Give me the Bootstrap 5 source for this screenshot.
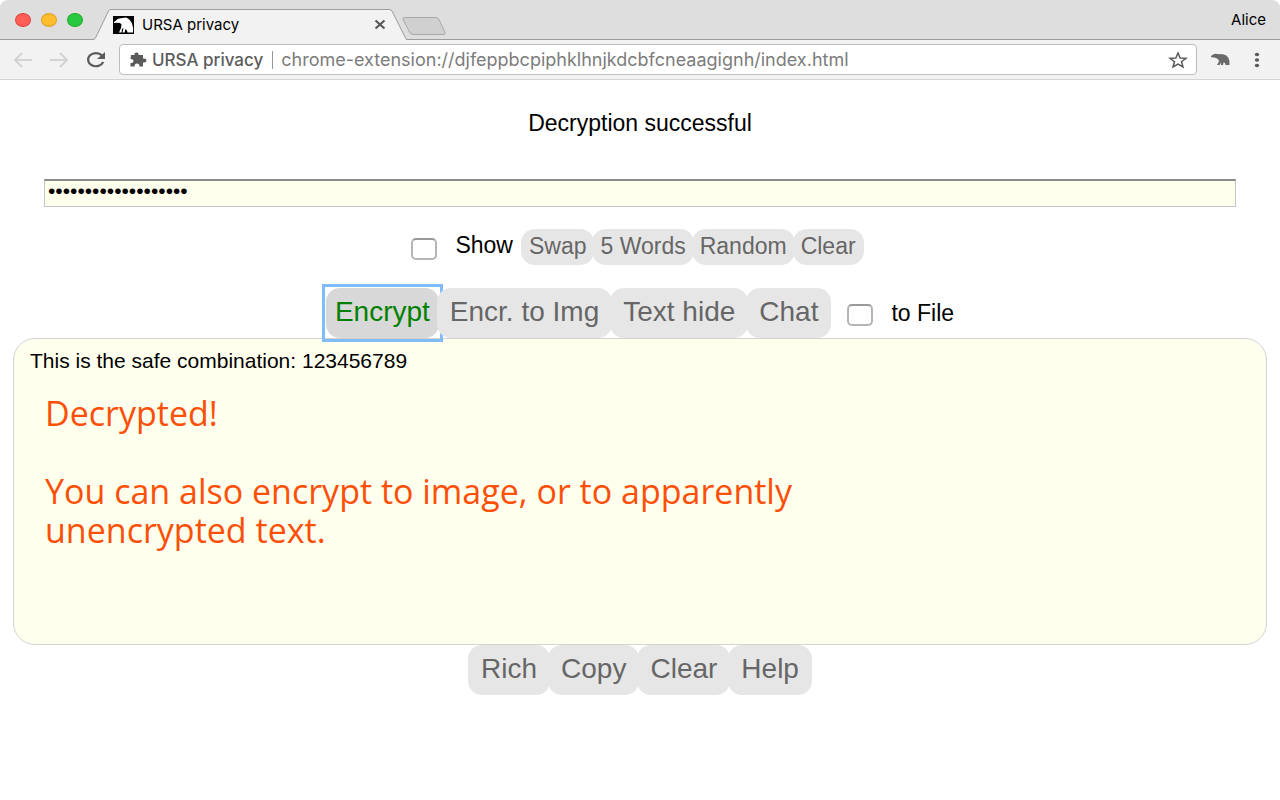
<!DOCTYPE html>
<html lang="en">
<head>
<meta charset="utf-8">
<meta name="viewport" content="width=device-width, initial-scale=1">
<title>URSA privacy</title>
<link href="https://cdn.jsdelivr.net/npm/bootstrap@5.3.0/dist/css/bootstrap.min.css" rel="stylesheet">
<style>
body { font-family: "Liberation Sans", Arial, sans-serif; font-size: 23px; line-height: 28px; color: #000; background: #fff; }
.chrome-ui { font-family: Inter, sans-serif; font-size: 15px; line-height: 20px; }
.tab-strip { height: 40px; background: #dedede; border-radius: 8px 8px 0 0; box-shadow: inset 0 -1px #9c9c9c; padding-right: 14px; }
.lights { gap: 10px; padding: 0 10px 0 15px; }
.light { width: 16px; height: 14px; border-radius: 50%; border: 1px solid; }
.tab-item { width: 314px; height: 40px; padding: 9px 21px 0 20px; }
.tab-shape { left: 0; top: 0; z-index: 0; }
.tab-item > :not(.tab-shape) { position: relative; }
.bar { height: 40px; background: #f2f2f2; border-bottom: 1px solid #d4d4d4; padding: 0 20px 0 13px; }
.icon-btn { background: none; border: 0; padding: 0; line-height: 0; display: block; }
.address { height: 31px; border: 1px solid #bdbdbd; border-radius: 4px; margin: 0 14px 0 12px; padding: 0 8px 0 9px; font-size: 17px; color: #7c7c7c; }
.address strong { font-weight: 500; color: #5c5c5c; }
.address input { border: 0; outline: 0; padding: 0; color: inherit; background: none; min-width: 0; font-size: 18px; }
.divider { width: 1px; height: 18px; background: #999; margin: 0 8px 0 9px; }
.status { margin: 29px 0 42px; }
.key-wrap { display: grid; }
.key-field { height: 28px; margin: 0 44px 22px; border: 1px solid #c4c4c4; border-top: 2px solid #8a8a8a; background: #ffffee; padding: 0 3px 5px; font-size: 21px; outline: 0; }
.pill { border: 0; background: #e6e6e6; color: #666; border-radius: 14px; height: 36px; padding: 0 8px 2px; }
.pill + .pill, .ring + .pill { margin-left: -2px; }
.pill-lg { height: 50px; font-size: 28px; padding: 0 13px 2px; }
.ring { outline: 3px solid #80bcfa; outline-offset: 1px; border-radius: 0; }
.ring .pill { background: #d8d8d8; color: #008000; padding: 0 9px 2px; outline: 0; display: block; }
.tick { appearance: none; width: 26px; height: 22px; margin: 4px 18px 0 0; border: 2px solid #b5b5b5; border-top-color: #999; border-radius: 5px; background: #fff; }
.tick:checked { background: #80bcfa; }
.row-keys { margin-bottom: 23px; padding-right: 5px; }
.row-actions { z-index: 1; }
.message-wrap { margin: 0 13px; }
.message { display: block; width: 100%; height: 307px; resize: none; border: 1px solid #d3d3d3; border-radius: 22px; background: #ffffee; padding: 8px 16px; font-size: 21px; outline: 0; }
.note { left: 32px; top: 56px; font-family: "Open Sans", sans-serif; font-size: 34px; line-height: 39px; color: #fc4f08; pointer-events: none; }
</style>
</head>
<body>
<header class="chrome-ui">
  <div class="tab-strip d-flex align-items-center">
    <div class="lights d-flex">
      <span class="light" style="background:#ff5f57;border-color:#e2463f"></span>
      <span class="light" style="background:#ffbd2e;border-color:#e0a023"></span>
      <span class="light" style="background:#28c940;border-color:#1dad2b"></span>
    </div>
    <div class="tab-item position-relative d-flex align-items-center pb-0">
      <svg class="tab-shape position-absolute" width="314" height="40" viewBox="0 0 314 40" aria-hidden="true"><path d="M0 40 Q2 39.500 3 37 L15.500 11 Q16.500 9.500 18 9.500 H296 Q298 9.500 299 11 L312 37 Q313 39.500 314 40Z" fill="#f2f2f2"/><path d="M0 39.500 Q2 39.500 3 37 L15.500 11 Q16.500 9.500 18 9.500 H296 Q298 9.500 299 11 L312 37 Q313 39.500 314 39.500" fill="none" stroke="#9c9c9c"/></svg>
      <svg class="me-2 flex-shrink-0" width="21" height="18" viewBox="0 0 21 18" aria-hidden="true"><rect width="21" height="18" fill="#000"/><path d="M1 6 L3.500 4 Q5 2 8 2.200 L13 1.500 Q17 3 19 7.500 Q20.500 11 20 16.500 H14.500 L14 14.500 L12.500 13 L11.500 16.500 H9.500 L10.500 12 L9 13 L8.500 16.500 H6 L8 12 L8.500 8.500 L7 7 Q4 6.500 1 7Z" fill="#fff"/></svg>
      <span class="flex-grow-1">URSA privacy</span>
      <button class="icon-btn" aria-label="Close tab"><svg width="12" height="11" viewBox="0 0 12 11"><path d="M1.500 1.500 L10.500 9.500 M10.500 1.500 L1.500 9.500" stroke="#555" stroke-width="2"/></svg></button>
    </div>
    <button class="icon-btn mt-3" aria-label="New tab"><svg width="46" height="26" viewBox="0 0 46 26" overflow="visible"><path d="M-2 2.500 Q-5 2.500 -4 4.500 L2.500 17 Q3.500 19.500 6 19.500 H36 Q39 19.500 38 17.500 L32 4.500 Q31 2.500 29 2.500Z" fill="#d0d0d0" stroke="#a8a8a8"/></svg></button>
    <span class="ms-auto">Alice</span>
  </div>
  <div class="bar d-flex align-items-center">
    <button class="icon-btn" aria-label="Back"><svg width="20" height="18" viewBox="0 0 20 18"><path d="M19 9 H2 M9 2 L2 9 L9 16" fill="none" stroke="#d2d2d2" stroke-width="2"/></svg></button>
    <button class="icon-btn ms-3" aria-label="Forward"><svg width="20" height="18" viewBox="0 0 20 18"><path d="M1 9 H18 M11 2 L18 9 L11 16" fill="none" stroke="#d2d2d2" stroke-width="2"/></svg></button>
    <button class="icon-btn ms-3" aria-label="Reload"><svg width="22" height="18" viewBox="0 0 22 18"><path d="M17 4.500 A7.800 6.600 0 1 0 18.200 11" fill="none" stroke="#5a5a5a" stroke-width="2.200"/><path d="M20 1 V8 H12Z" fill="#5a5a5a"/></svg></button>
    <div class="address flex-grow-1 d-flex align-items-center bg-white">
      <svg class="me-1 flex-shrink-0" width="19" height="16" viewBox="0 0 19 16" aria-hidden="true"><path d="M2 3 H5.500 Q5 .5 7.500 .5 Q10 .5 9.500 3 H14 V6.500 Q17.500 6 17.500 8.500 Q17.500 11 14 10.500 V14.500 H10.500 Q10.500 11.500 8 11.500 Q5.500 11.500 5.500 14.500 H1.500 V11 Q4.500 11 4.500 9 Q4.500 7 1.500 7Z" fill="#5a5a5a"/></svg>
      <strong class="text-nowrap">URSA privacy</strong><span class="divider"></span>
      <input class="flex-grow-1" type="text" aria-label="Address" value="chrome-extension://djfeppbcpiphklhnjkdcbfcneaagignh/index.html">
      <button class="icon-btn" aria-label="Bookmark"><svg width="20" height="18" viewBox="0 0 20 18"><path d="M10 2 L12.200 7 L18 7.300 L13.500 10.700 L15 16 L10 13 L5 16 L6.500 10.700 L2 7.300 L7.800 7Z" fill="none" stroke="#5a5a5a" stroke-width="1.500"/></svg></button>
    </div>
    <button class="icon-btn" aria-label="URSA"><svg width="19" height="13" viewBox="0 0 19 13"><path d="M0 3 L2.500 1.300 Q4 .5 6 1 L12 1.200 Q16 2 17.500 5 Q19 8 18.500 12 H14.500 L14 10 L12.500 9.500 L12 12 H10 L10 9.500 L8.500 12 H6 L8 8.500 Q8 6.500 6 5.500 Q3 4 0 4.200Z" fill="#6a6a6a"/></svg></button>
    <button class="icon-btn ms-4" aria-label="Menu"><svg width="6" height="16" viewBox="0 0 6 16"><g fill="#5a5a5a"><ellipse cx="3" cy="2.500" rx="2.200" ry="1.800"/><ellipse cx="3" cy="8" rx="2.200" ry="1.800"/><ellipse cx="3" cy="13.500" rx="2.200" ry="1.800"/></g></svg></button>
  </div>
</header>
<main>
  <p class="status text-center">Decryption successful</p>
  <div class="key-wrap"><input class="key-field" type="password" aria-label="Key" value="correcthorsebattery"></div>
  <div class="row-keys d-flex justify-content-center align-items-center">
    <input class="tick" type="checkbox" id="show"><label class="me-2 pb-1" for="show">Show</label>
    <button class="pill">Swap</button><button class="pill">5 Words</button><button class="pill">Random</button><button class="pill">Clear</button>
  </div>
  <div class="row-actions position-relative d-flex justify-content-center align-items-center">
    <span class="ring"><button class="pill pill-lg">Encrypt</button></span><button class="pill pill-lg position-relative">Encr. to Img</button><button class="pill pill-lg">Text hide</button><button class="pill pill-lg">Chat</button>
    <input class="tick ms-3" type="checkbox" id="tofile"><label for="tofile">to File</label>
  </div>
  <div class="message-wrap position-relative">
    <textarea class="message" aria-label="Message">This is the safe combination: 123456789</textarea>
    <div class="note position-absolute">Decrypted!<br><br>You can also encrypt to image, or to apparently<br>unencrypted text.</div>
  </div>
  <div class="d-flex justify-content-center">
    <button class="pill pill-lg">Rich</button><button class="pill pill-lg">Copy</button><button class="pill pill-lg">Clear</button><button class="pill pill-lg">Help</button>
  </div>
</main>
<script src="https://cdn.jsdelivr.net/npm/bootstrap@5.3.0/dist/js/bootstrap.bundle.min.js"></script>
</body>
</html>
